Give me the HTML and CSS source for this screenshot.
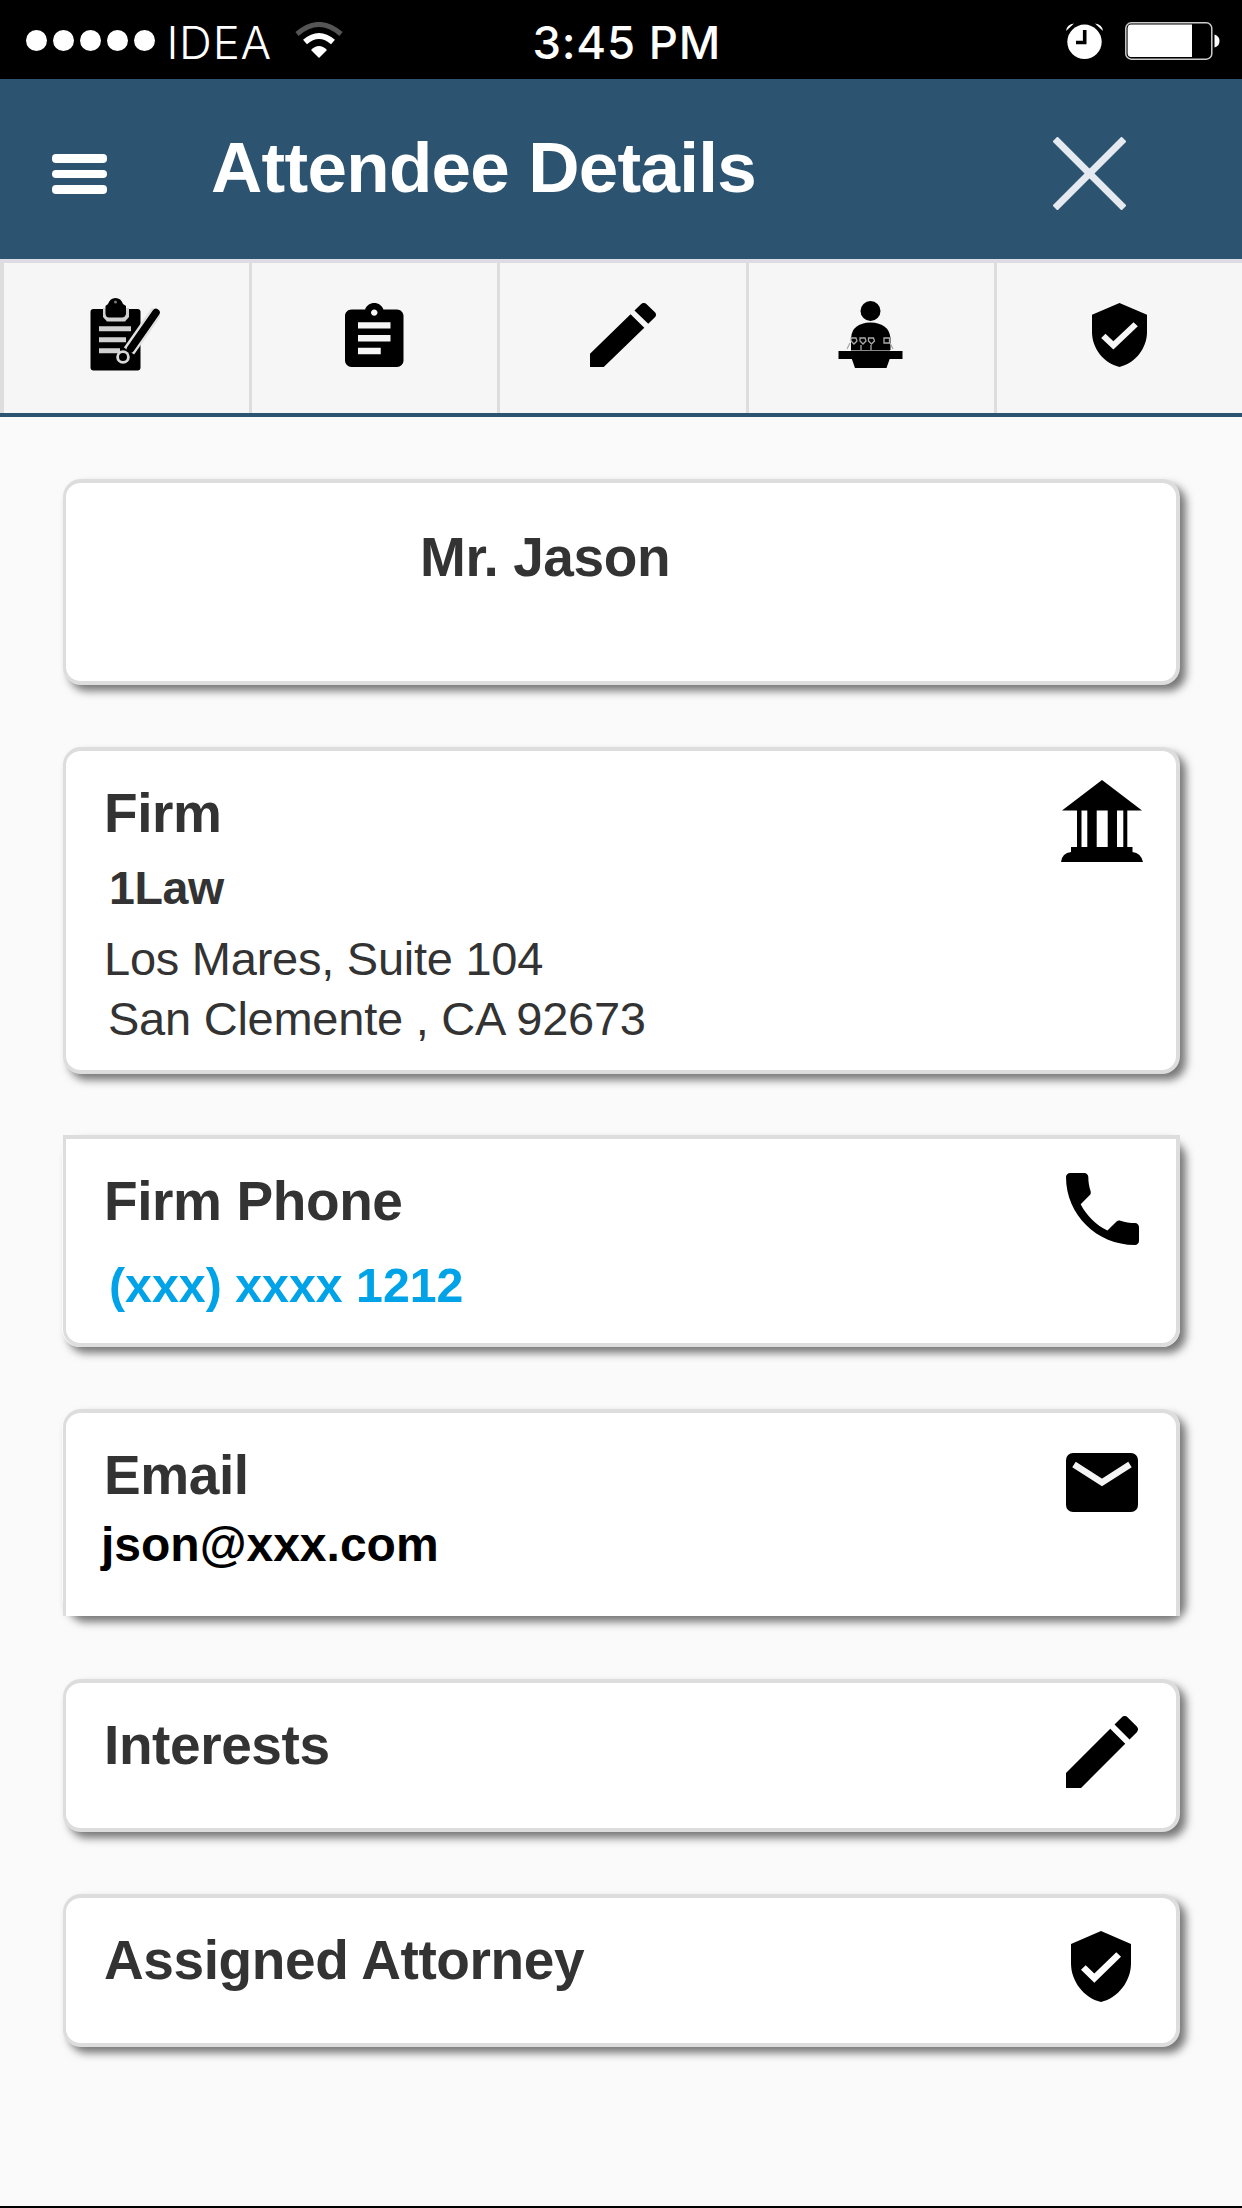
FILE: index.html
```html
<!DOCTYPE html>
<html lang="en">
<head>
    <meta charset="UTF-8" />
    <meta name="viewport" content="width=device-width, initial-scale=1" />
    <title>Attendee Details</title>
    <link rel="stylesheet" href="styles.css">
</head>
<body>
    <div class="status-bar">
        <div class="signal">
            <span class="dot"></span><span class="dot"></span><span class="dot"></span><span class="dot"></span><span class="dot"></span>
        </div>
        <span class="carrier">IDEA</span>
        <svg class="wifi" viewBox="0 0 48 36">
            <path d="M2 12 Q24 -7 46 12" fill="none" stroke="#555" stroke-width="5" />
            <path d="M10 20 Q24 8 38 20" fill="none" stroke="#fff" stroke-width="6" />
            <path d="M16 28 Q24 20 32 28 L24 36 Z" fill="#fff" />
        </svg>
        <span class="clock">3:45 PM</span>
        <svg class="alarm" viewBox="0 0 37 36">
            <ellipse cx="18.5" cy="18.8" rx="17.2" ry="17.2" fill="#fff" />
            <path d="M0 8 Q1 1 8 0.5 Z M37 8 Q36 1 29 0.5 Z" fill="#fff" />
            <path d="M18.7 7 V19.5 H10" fill="none" stroke="#000" stroke-width="3.6" />
        </svg>
        <svg class="battery" viewBox="0 0 95 38">
            <rect x="0.8" y="0.8" width="86" height="36.4" rx="5.5" fill="none" stroke="#ccc" stroke-width="1.5" />
            <path d="M6 2.6 H67 V35 H6 Q2.6 35 2.6 31 V7 Q2.6 2.6 6 2.6 Z" fill="#fff" />
            <path d="M89.5 12.5 Q94.5 14 94.5 19 T89.5 25.5 Z" fill="#fff" />
        </svg>
    </div>

    <header class="header">
        <button class="menu-btn" aria-label="Menu">
            <span></span><span></span><span></span>
        </button>
        <h1>Attendee Details</h1>
        <button class="close-btn" aria-label="Close">
            <svg viewBox="0 0 73 73">
                <path d="M2 2 L71 71 M71 2 L2 71" stroke="#e4eaf0" stroke-width="7" />
            </svg>
        </button>
    </header>

    <nav class="tabs">
        <a class="tab">
            <svg class="tab-notes" viewBox="0 0 70 73">
                <rect x="0.5" y="11" width="50" height="61.5" rx="3" />
                <path d="M13 10 H39 V19 L35 23.5 H17 L13 19 Z" fill="#d0d0d0" />
                <path d="M18 6 Q20 0 25.5 0 Q31 0 33 6 L36 8 V16 Q35 19.500 32 19.500 H19 Q16 19.500 15.500 16 V8 Z" />
                <circle cx="25.500" cy="4" r="1.500" fill="#777" />
                <path d="M9 30.700 H41 M9 41.700 H36 M9 52.700 H30" stroke="#d0d0d0" stroke-width="5" />
                <path d="M67 13 L39 53" stroke="#e0e0e0" stroke-width="12.500" />
                <circle cx="33" cy="59" r="6.800" fill="#d8d8d8" />
                <circle cx="33" cy="59" r="4" />
                <path d="M66 14.500 L40.500 51" stroke="#000" stroke-width="7.500" stroke-linecap="round" />
            </svg>
        </a>
        <a class="tab">
            <svg class="tab-list" viewBox="3 1 18 20" preserveAspectRatio="none">
                <path d="M19 3h-4.180C14.400 1.840 13.300 1 12 1s-2.400.84-2.820 2H5c-1.100 0-2 .9-2 2v14c0 1.100.9 2 2 2h14c1.100 0 2-.9 2-2V5c0-1.100-.9-2-2-2zm-7 0c.55 0 1 .45 1 1s-.45 1-1 1-1-.45-1-1 .45-1 1-1zm2 14H7v-2h7v2zm3-4H7v-2h10v2zm0-4H7V7h10v2z" />
            </svg>
        </a>
        <a class="tab">
            <svg class="tab-edit" viewBox="3 3 18 18" preserveAspectRatio="none">
                <path d="M3 17.250V21h3.750L17.810 9.940l-3.750-3.750L3 17.250zM20.710 7.040c.39-.39.39-1.020 0-1.410l-2.340-2.340c-.39-.39-1.020-.39-1.410 0l-1.830 1.830 3.750 3.750 1.830-1.830z" />
            </svg>
        </a>
        <a class="tab">
            <svg class="tab-speaker" viewBox="0 0 65 68">
                <circle cx="32.500" cy="11" r="10" />
                <path d="M13 50 V38 Q14 23 32.500 22.500 Q51 23 52.500 38 V50 Z" />
                <rect x="0.500" y="51" width="64" height="8" />
                <path d="M13.500 58 H52 L48.500 68 H17 Z" />
                <path d="M13 50.500 H52" stroke="#888" stroke-width="1" />
                <g fill="none" stroke="#aaa" stroke-width="1.300">
                    <path d="M13 38 h5 l1 3 l-3 3 l-3 -3 z M22 38 h5 l1 3 l-3 3 l-3 -3 z M30.500 38 h5 l1 3 l-3 3 l-3 -3 z M46 38 h5.500 v5 h-5.500 z" />
                    <path d="M12 43 L9 49 M23 45 v5 M33 45 v5 M52 43 L55 49" />
                </g>
            </svg>
        </a>
        <a class="tab">
            <svg class="tab-shield" viewBox="3 1 18 22" preserveAspectRatio="none">
                <path d="M12 1L3 5v6c0 5.550 3.840 10.740 9 12 5.160-1.260 9-6.450 9-12V5l-9-4zm-2 16l-4-4 1.410-1.410L10 14.170l6.590-6.590L18 9l-8 8z" />
            </svg>
        </a>
    </nav>

    <main class="content">
        <section class="card card-name">
            <h2>Mr. Jason</h2>
        </section>

        <section class="card card-firm">
            <div class="info">
                <h2>Firm</h2>
                <p class="firm-name">1Law</p>
                <p class="address">Los Mares, Suite 104</p>
                <p class="city">San Clemente , CA 92673</p>
            </div>
            <svg class="icon icon-bank" viewBox="0 0 82 82">
                <path d="M41 0 L81 30.500 H1 Z" />
                <path d="M16 30 H20.500 V68 H16 Z M26.300 30 H35.700 V68 H26.300 Z M46.700 30 H56 V68 H46.700 Z M62.300 30 H66.300 V68 H62.300 Z" />
                <path d="M10 67 H71.500 V72 Q80 73 82 82 H0 Q1 73 10 72 Z" />
            </svg>
        </section>

        <section class="card card-phone">
            <div class="info">
                <h2>Firm Phone</h2>
                <a class="phone">(xxx) xxxx 1212</a>
            </div>
            <svg class="icon icon-phone" viewBox="3 3 18 18" preserveAspectRatio="none">
                <path d="M6.620 10.790c1.440 2.830 3.760 5.140 6.590 6.590l2.200-2.200c.27-.27.67-.36 1.020-.24 1.120.37 2.330.57 3.570.57.55 0 1 .45 1 1V20c0 .55-.45 1-1 1-9.390 0-17-7.610-17-17 0-.55.45-1 1-1h3.500c.55 0 1 .45 1 1 0 1.250.2 2.450.57 3.570.11.35.03.74-.25 1.020l-2.200 2.200z" />
            </svg>
        </section>

        <section class="card card-email">
            <div class="info">
                <h2>Email</h2>
                <p class="email">json@xxx.com</p>
            </div>
            <svg class="icon icon-mail" viewBox="0 0 72 59">
                <rect width="72" height="59" rx="7" />
                <path d="M8 11.500 L36 29.500 L64 11.500" fill="none" stroke="#f4f4f4" stroke-width="6.500" />
            </svg>
        </section>

        <section class="card card-interests">
            <h2>Interests</h2>
            <svg class="icon icon-edit" viewBox="3 3 18 18" preserveAspectRatio="none">
                <path d="M3 17.250V21h3.750L17.810 9.940l-3.750-3.750L3 17.250zM20.710 7.040c.39-.39.39-1.020 0-1.410l-2.340-2.340c-.39-.39-1.020-.39-1.410 0l-1.830 1.830 3.750 3.750 1.830-1.830z" />
            </svg>
        </section>

        <section class="card card-attorney">
            <h2>Assigned Attorney</h2>
            <svg class="icon icon-shield" viewBox="3 1 18 22" preserveAspectRatio="none">
                <path d="M12 1L3 5v6c0 5.550 3.840 10.740 9 12 5.160-1.260 9-6.450 9-12V5l-9-4zm-2 16l-4-4 1.410-1.410L10 14.170l6.590-6.590L18 9l-8 8z" />
            </svg>
        </section>
    </main>
</body>
</html>
```

FILE: styles.css
```css
* {
    box-sizing: border-box;
}
body {
    margin: 0;
    height: 2208px;
    font-family: "Liberation Sans", Arial, sans-serif;
    background: #fafafa;
    color: #333;
    border-bottom: 2px solid #000;
}
h1, h2, p {
    margin: 0;
}
svg {
    display: block;
    flex-shrink: 0;
}
button {
    padding: 0;
    border: none;
    background: none;
}

/* status bar */
.status-bar {
    display: flex;
    align-items: flex-start;
    height: 79px;
    padding: 22px 22px 0 26px;
    background: #000;
    color: #fff;
    font-family: Inter, "Liberation Sans", sans-serif;
    font-size: 45.5px;
    line-height: 41px;
    white-space: nowrap;
}
.signal {
    display: flex;
    gap: 6.1px;
    padding-top: 8px;
}
.dot {
    width: 21px;
    height: 21px;
    border-radius: 50%;
    background: #fff;
}
.carrier {
    width: 140px;
    padding-left: 11px;
    font-weight: 300;
    letter-spacing: 0.8px;
}
.wifi {
    width: 48px;
    height: 36px;
}
.clock {
    margin-left: 189px;
    font-weight: 500;
    letter-spacing: 0.8px;
}
.alarm {
    width: 37px;
    height: 36px;
    margin: 1px 22px 0 auto;
}
.battery {
    width: 95px;
    height: 38px;
}

/* header */
.header {
    display: flex;
    align-items: flex-start;
    height: 180px;
    padding: 0 116px 0 52px;
    background: #2c5470;
    color: #fff;
}
.menu-btn {
    display: flex;
    flex-direction: column;
    gap: 7px;
    width: 55px;
    margin: 75px 104px 0 0;
}
.menu-btn span {
    height: 8.5px;
    border-radius: 4px;
    background: #fff;
}
.header h1 {
    margin-top: 49px;
    font-size: 71px;
    line-height: 80px;
    letter-spacing: -0.7px;
}
.close-btn {
    width: 73px;
    height: 73px;
    margin: 58px 0 0 auto;
}

/* tabs */
.tabs {
    display: grid;
    grid-template-columns: 252px repeat(3, 248.3px) 1fr;
    height: 158px;
    background: #f6f6f6;
    border-top: 4px solid #dddbe4;
    border-bottom: 4px solid #2c5470;
}
.tab {
    display: flex;
    justify-content: center;
    border-right: 3px solid #ddd;
}
.tab:first-child {
    border-left: 4px solid #ddd;
}
.tab:last-child {
    border-right: none;
}
.tab-notes {
    width: 70px;
    height: 73px;
    margin: 35px 3px 0 0;
}
.tab-list {
    width: 58.5px;
    height: 64px;
    margin-top: 40px;
}
.tab-edit {
    width: 66px;
    height: 64px;
    margin-top: 40px;
}
.tab-speaker {
    width: 65px;
    height: 68px;
    margin: 37px 2px 0 0;
}
.tab-shield {
    width: 55px;
    height: 64px;
    margin-top: 40px;
}

/* cards */
.content {
    display: flex;
    flex-direction: column;
    gap: 62px;
    padding: 62px 62px 0 63px;
}
.card {
    position: relative;
    display: flex;
    justify-content: space-between;
    align-items: flex-start;
    padding: 32px 33px 0 37px;
    background: #fff;
    border: 4px solid #ddd;
    border-left-width: 3px;
    border-radius: 18px;
    box-shadow: 6px 6px 9px #777;
}
.card h2 {
    font-size: 55px;
    line-height: 60px;
    letter-spacing: -0.4px;
    padding-left: 1px;
}
.card-name {
    height: 206px;
    padding: 44px 0 0 353px;
}
.card-firm {
    height: 327px;
}
.card-phone {
    height: 212px;
    margin-top: -1px;
    border-radius: 0 0 18px 18px;
}
.card-email {
    height: 207px;
    border-bottom: none;
    border-radius: 18px 18px 0 0;
}
.card-interests {
    height: 153px;
    margin-top: 1px;
}
.card-attorney {
    height: 153px;
}

/* square-cornered cards keep the rounded shadow */
.card-phone,
.card-email {
    box-shadow: none;
}
.card-phone::before,
.card-email::before {
    content: "";
    position: absolute;
    z-index: -1;
    inset: -4px;
    border-radius: 18px;
    box-shadow: 6px 6px 9px #777;
}
.card-email::before {
    bottom: 0;
}

.firm-name {
    margin: 20px 0 0 6px;
    font-size: 46.5px;
    font-weight: bold;
    line-height: 50px;
    letter-spacing: -0.4px;
}
.address,
.city {
    font-size: 47px;
    line-height: 50px;
    letter-spacing: -0.25px;
}
.address {
    margin: 21px 0 0 1px;
}
.city {
    margin: 10px 0 0 5px;
}
.phone {
    display: block;
    margin: 27px 0 0 6px;
    font-size: 48.3px;
    font-weight: bold;
    line-height: 54px;
    color: #00a2e8;
}
.email {
    margin: 13px 0 0 -2px;
    font-size: 48px;
    font-weight: bold;
    line-height: 54px;
    color: #000;
}

.icon-bank {
    width: 82px;
    height: 82px;
    margin-top: -3px;
}
.icon-phone {
    width: 73px;
    height: 72px;
    margin: 2px 4px 0 0;
}
.icon-mail {
    width: 72px;
    height: 59px;
    margin: 8px 5px 0 0;
}
.icon-edit {
    width: 72px;
    height: 72px;
    margin: 1px 5px 0 0;
}
.icon-shield {
    width: 60px;
    height: 71px;
    margin: 1px 12px 0 0;
}
```
